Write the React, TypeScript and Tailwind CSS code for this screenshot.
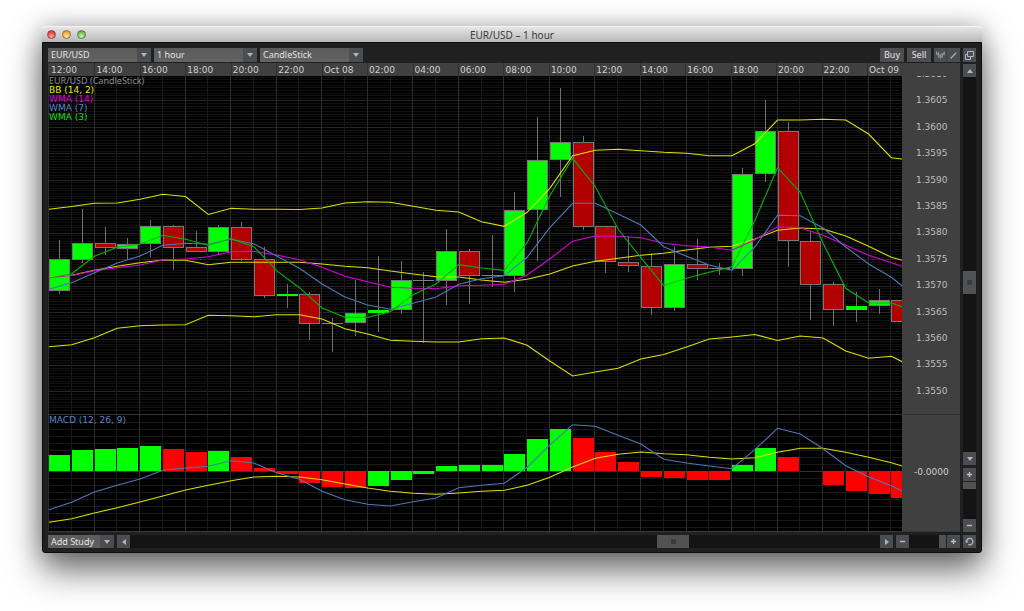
import type { ReactNode } from "react";
import clsx from "clsx";

const STEP = 22.77;
const LEFT = 48;
const RIGHT = 902;

type Tone = "up" | "down" | "flat";

// high, body top, body bottom, low
const CANDLES: [number, number, number, number, Tone][] = [
  [240, 259, 291, 294, "up"],
  [209, 243, 260, 263, "up"],
  [227, 243, 248, 255, "down"],
  [238, 244, 249, 260, "up"],
  [220, 226, 244, 257, "up"],
  [225, 226, 248, 270, "down"],
  [231, 247, 252, 252, "down"],
  [225, 227, 252, 254, "up"],
  [222, 227, 260, 261, "down"],
  [247, 259, 296, 298, "down"],
  [284, 294, 296, 308, "up"],
  [292, 294, 324, 340, "down"],
  [318, 323, 323, 352, "flat"],
  [280, 313, 323, 336, "up"],
  [256, 310, 313, 332, "up"],
  [261, 280, 310, 314, "up"],
  [272, 280, 280, 343, "flat"],
  [229, 251, 281, 305, "up"],
  [249, 251, 276, 304, "down"],
  [235, 275, 275, 287, "flat"],
  [192, 210, 276, 292, "up"],
  [117, 160, 210, 261, "up"],
  [88, 142, 160, 197, "up"],
  [136, 142, 227, 230, "down"],
  [226, 226, 262, 273, "down"],
  [236, 262, 266, 272, "down"],
  [253, 266, 308, 315, "down"],
  [247, 264, 308, 311, "up"],
  [239, 264, 269, 280, "down"],
  [263, 268, 268, 275, "flat"],
  [168, 174, 269, 276, "up"],
  [100, 131, 174, 182, "up"],
  [122, 131, 241, 267, "down"],
  [231, 241, 285, 320, "down"],
  [282, 284, 310, 326, "down"],
  [292, 306, 310, 322, "up"],
  [289, 300, 306, 314, "up"],
  [300, 300, 322, 322, "down"],
];

const BB_UPPER = [209.3, 206.5, 203.3, 203, 199.3, 194.3, 196.5, 214.5, 208.3, 209.3, 209.3, 209.5, 208, 203, 201.7, 202.3, 206.3, 210.3, 212, 221.7, 226.3, 212.3, 188.3, 155.7, 150.3, 149.3, 150.7, 152.3, 153.3, 155.7, 155.7, 143.7, 120, 120, 119.3, 120, 134, 157.7, 159];
const BB_MIDDLE = [277.5, 275.3, 270.3, 266.3, 262.7, 260, 260.3, 264.7, 262.3, 262.3, 262.3, 262.3, 264, 266.3, 267.7, 271, 274, 276.7, 277, 280, 282.3, 279.3, 274, 266, 261.3, 258.3, 255.3, 253.3, 250, 247.3, 246.3, 239, 230.3, 228, 229, 236, 246.3, 257.3, 260.3];
const BB_LOWER = [346.7, 344.7, 337.7, 328.3, 325.7, 325, 324.7, 315.3, 315.7, 316.7, 314.7, 314.7, 319, 328.7, 334, 340.3, 341.3, 342, 342, 338.7, 338, 345.3, 361, 376, 372, 368.3, 359, 354.5, 347, 339, 337, 334.5, 340.5, 336, 338, 351, 358.3, 356.3, 361.7];
const WMA_14 = [277.7, 275.5, 270.7, 267.7, 265, 260, 259, 256.7, 251.7, 251.3, 255, 259.7, 267.3, 276.3, 281.7, 287.3, 288.3, 288.7, 285.7, 285.3, 284.3, 275, 259, 241.3, 236, 236.3, 237.7, 243.3, 245.7, 247, 250.3, 239.7, 226.7, 227.7, 235.3, 245.3, 255.3, 262.7, 266.3];
const WMA_7 = [289.3, 282.7, 272.7, 263, 256, 245.3, 243.3, 244.3, 239.3, 243.7, 256, 268.3, 284, 297, 305, 309.3, 303.3, 297, 284.3, 278.7, 275.7, 257.3, 227.7, 203.3, 203.3, 214, 225, 246.7, 256.3, 265, 270.3, 247, 215.3, 215.7, 228, 247, 264, 277.3, 285.7];
const WMA_3 = [278, 273.7, 256.3, 247.3, 244.3, 235.3, 239.3, 245.3, 238.7, 246.7, 270.7, 287.7, 308, 317.3, 317.3, 311.7, 294.7, 284, 264.7, 268, 270.3, 242.7, 195.7, 158.3, 186.7, 229, 257.7, 285.7, 278.3, 272.3, 266.7, 220.7, 167.7, 192.3, 243.3, 288.3, 303, 303, 306.7];

const ZERO = 471;
// far edge of each histogram bar, measured against ZERO
const HISTOGRAM: [number, Tone][] = [
  [455, "up"], [450, "up"], [449, "up"], [448, "up"], [446, "up"], [449, "down"], [452, "down"], [451, "up"],
  [457, "down"], [468, "down"], [474, "down"], [483, "down"], [487, "down"], [488, "down"], [486, "up"], [480, "up"],
  [474, "up"], [466, "up"], [465, "up"], [465, "up"], [454, "up"], [439, "up"], [429, "up"], [438, "down"],
  [452, "down"], [462, "down"], [477, "down"], [478, "down"], [480, "down"], [480, "down"], [465, "up"], [448, "up"],
  [457, "down"], [471, "flat"], [485, "down"], [491, "down"], [494, "down"], [498, "down"],
];
const MACD = [509.7, 502.3, 492, 485.3, 479, 470.3, 468, 466.3, 460.7, 463, 472.7, 479.3, 491.3, 499.7, 504.3, 506, 501.7, 498, 487.7, 485.3, 483.3, 467.3, 445, 424.7, 426.3, 435.3, 444, 459.3, 463, 466, 468.7, 449.7, 428.3, 434, 448.7, 465.7, 476.7, 485.7, 491];
const SIGNAL = [522.3, 518.7, 513, 507.7, 502, 496, 490, 485.3, 480.7, 477, 476.3, 477, 479.7, 484, 488, 491.3, 493.3, 494.3, 493, 491.3, 490.3, 485.3, 477.3, 467, 458.3, 454.3, 452, 453.7, 454.7, 457.3, 459, 457.7, 452.3, 448.3, 448.3, 452.3, 457.3, 462.7, 466];

const TIMES = ["12:00", "14:00", "16:00", "18:00", "20:00", "22:00", "Oct 08", "02:00", "04:00", "06:00", "08:00", "10:00", "12:00", "14:00", "16:00", "18:00", "20:00", "22:00", "Oct 09"];
const PRICES = ["1.3610", "1.3605", "1.3600", "1.3595", "1.3590", "1.3585", "1.3580", "1.3575", "1.3570", "1.3565", "1.3560", "1.3555", "1.3550"];

const FILL = { up: "#00ff00", down: "#b20000", flat: "#808080" };
const BAR_FILL = { up: "#00ff00", down: "#ff0000", flat: "none" };

function Line({ values, color }: { values: number[]; color: string }) {
  const points = values.map((y, i) => `${Math.min(LEFT + 0.9 + i * STEP, RIGHT).toFixed(1)},${y}`).join(" ");
  return <polyline points={points} fill="none" stroke={color} strokeWidth="1.1" />;
}

function VerticalGrid({ top, bottom }: { top: number; bottom: number }) {
  return (
    <g shapeRendering="crispEdges">
      {CANDLES.map((_, i) => (
        <line
          key={i}
          x1={Math.round(LEFT + i * STEP) + 0.5}
          x2={Math.round(LEFT + i * STEP) + 0.5}
          y1={top}
          y2={bottom}
          stroke={i % 2 ? "#191919" : "#2c2c2c"}
        />
      ))}
    </g>
  );
}

function Candle({ x, high, top, bottom, low, tone }: { x: number; high: number; top: number; bottom: number; low: number; tone: Tone }) {
  const height = bottom - top;
  let body = <rect x={x + 0.5} y={top + 0.5} width="20" height={Math.max(height - 1, 1)} fill={FILL[tone]} stroke="#777777" />;
  if (tone === "flat") body = <line x1={x} x2={x + 21} y1={top + 0.5} y2={top + 0.5} stroke="#808080" />;
  else if (tone === "up" && height <= 4) body = <rect x={x} y={top} width="21" height={height} fill={FILL[tone]} />;
  return (
    <g shapeRendering="crispEdges">
      <line x1={x + 10.5} x2={x + 10.5} y1={high} y2={low} stroke="#707070" />
      {body}
    </g>
  );
}

function PriceChart() {
  const rows = Array.from({ length: 128 }, (_, i) => i);
  return (
    <svg viewBox="48 76 854 338" preserveAspectRatio="none" className="block w-full h-[338px]" role="img" aria-label="Price">
      <g shapeRendering="crispEdges">
        {rows.map((i) => {
          const y = Math.round(76 + i * 2.645 - 2) + 0.5;
          return <line key={i} x1={LEFT} x2={RIGHT} y1={y} y2={y} stroke={i % 10 === 0 ? "#262626" : "#111111"} />;
        })}
      </g>
      <VerticalGrid top={76} bottom={414} />
      {CANDLES.map(([high, top, bottom, low, tone], i) => (
        <Candle key={i} x={Math.round(49 + i * STEP)} high={high} top={top} bottom={bottom} low={low} tone={tone} />
      ))}
      <Line values={BB_UPPER} color="#dede00" />
      <Line values={BB_MIDDLE} color="#dede00" />
      <Line values={BB_LOWER} color="#dede00" />
      <Line values={WMA_14} color="#d800d8" />
      <Line values={WMA_7} color="#5078b4" />
      <Line values={WMA_3} color="#00b400" />
    </svg>
  );
}

function MacdChart() {
  const rows = Array.from({ length: 16 }, (_, i) => i);
  return (
    <svg viewBox="48 415 854 116" preserveAspectRatio="none" className="block w-full h-[116px]" role="img" aria-label="MACD">
      <g shapeRendering="crispEdges">
        {rows.map((i) => (
          <line key={i} x1={LEFT} x2={RIGHT} y1={422.5 + i * 7} y2={422.5 + i * 7} stroke={i === 7 ? "#333333" : "#191919"} />
        ))}
      </g>
      <VerticalGrid top={415} bottom={531} />
      <g shapeRendering="crispEdges">
        {HISTOGRAM.map(([edge, tone], i) => {
          const x = Math.round(49 + i * STEP);
          return <rect key={i} x={x} y={Math.min(edge, ZERO)} width="21" height={Math.abs(edge - ZERO)} fill={BAR_FILL[tone]} />;
        })}
      </g>
      <Line values={SIGNAL} color="#dede00" />
      <Line values={MACD} color="#5078b4" />
    </svg>
  );
}

function Arrow({ className }: { className?: string }) {
  return (
    <svg viewBox="0 0 6 4" className={clsx("w-[6px] h-1 shrink-0", className)} aria-hidden="true">
      <path d="M0 0h6L3 4z" fill="#a9b7c3" />
    </svg>
  );
}

function Plus() {
  return (
    <svg viewBox="0 0 5 5" className="w-[5px] h-[5px]" aria-hidden="true">
      <path d="M1.8 0h1.4v1.8H5v1.4H3.2V5H1.8V3.2H0V1.8h1.8z" fill="#b4c2ce" />
    </svg>
  );
}

function Minus() {
  return (
    <svg viewBox="0 0 5 5" className="w-[5px] h-[5px]" aria-hidden="true">
      <path d="M0 1.8h5v1.4H0z" fill="#b4c2ce" />
    </svg>
  );
}

function ToolButton({ label, className, children }: { label: string; className?: string; children: ReactNode }) {
  return (
    <button
      type="button"
      aria-label={label}
      className={clsx("flex items-center justify-center w-[13px] shrink-0 bg-[#4b4d50] hover:bg-[#5a5c5f]", className ?? "h-[13px]")}
    >
      {children}
    </button>
  );
}

function Picker({ label, options }: { label: string; options: string[] }) {
  return (
    <div className="relative flex w-[103px] h-[14px]">
      <select
        aria-label={label}
        className="appearance-none w-full h-full pl-[3px] pr-4 bg-linear-to-b from-[#5a5a5a] to-[#636363] text-[9px] leading-[14px] text-[#e0e0e0] outline-none"
      >
        {options.map((o) => <option key={o}>{o}</option>)}
      </select>
      <span className="absolute right-0 top-0 flex items-center justify-center w-[14px] h-full bg-[#4b4d50] pointer-events-none">
        <Arrow />
      </span>
    </div>
  );
}

const textButton = "h-[14px] bg-[#4e4e50] text-[9px] leading-[14px] text-[#e6e6e6] hover:bg-[#5a5c5f]";
const track = "appearance-none block m-0 bg-[#141414] outline-none [&::-webkit-slider-thumb]:appearance-none [&::-webkit-slider-thumb]:bg-[#505254]";
const vertical = "w-[13px] min-h-0 [writing-mode:vertical-lr] [&::-webkit-slider-thumb]:w-[13px]";
const grip = "[&::-webkit-slider-thumb]:bg-[linear-gradient(#393b3d,#393b3d)] [&::-webkit-slider-thumb]:bg-[length:5px_5px] [&::-webkit-slider-thumb]:bg-center [&::-webkit-slider-thumb]:bg-no-repeat";

function TitleBar() {
  return (
    <header className="relative flex items-center h-4 pl-[5px] rounded-t-[4px] bg-linear-to-b from-[#e6e6e6] to-[#b8b8b8] border-t border-[#f4f4f4]">
      <div className="flex gap-[6px]">
        <button type="button" aria-label="Close" className="w-[9px] h-[9px] rounded-full border border-[#8a4a48] bg-[radial-gradient(circle_at_50%_80%,#ffb0a8,#ee4a45_60%,#c03a38)]" />
        <button type="button" aria-label="Minimize" className="w-[9px] h-[9px] rounded-full border border-[#94703c] bg-[radial-gradient(circle_at_50%_80%,#ffe9a0,#f2b14a_60%,#c08530)]" />
        <button type="button" aria-label="Zoom" className="w-[9px] h-[9px] rounded-full border border-[#55803f] bg-[radial-gradient(circle_at_50%_80%,#d4f5b4,#7cc35c_60%,#569040)]" />
      </div>
      <h1 className="absolute inset-x-0 text-center text-[10px] leading-[14px] text-[#3c3c3c] pointer-events-none">EUR/USD – 1 hour</h1>
    </header>
  );
}

function Toolbar() {
  return (
    <div className="flex items-center gap-[3px] h-[14px]">
      <Picker label="Instrument" options={["EUR/USD", "GBP/USD", "USD/JPY"]} />
      <Picker label="Interval" options={["1 hour", "4 hours", "1 day"]} />
      <Picker label="Chart type" options={["CandleStick", "Bar", "Line"]} />
      <button type="button" className={clsx(textButton, "w-6 ml-auto")}>Buy</button>
      <button type="button" className={clsx(textButton, "w-6")}>Sell</button>
      <div className="flex">
        <ToolButton label="Studies" className="h-[14px] border-r border-[#3e4042]">
          <svg viewBox="0 0 9 8" className="w-[9px] h-2 shrink-0" aria-hidden="true">
            <path d="M.7.6v3.2M2.6 1.4v5M4.4 3.4v4M6.2 2v4.6M8.2.4v3.6" stroke="#8f9aa4" strokeWidth="1.3" />
            <path d="M.9 2.6l2.4 3.2h2.4l2.4-3.4" fill="none" stroke="#7b858d" strokeWidth="1.2" />
          </svg>
        </ToolButton>
        <ToolButton label="Draw line" className="h-[14px]">
          <svg viewBox="0 0 7 7" className="w-[7px] h-[7px]" aria-hidden="true">
            <path d="M.7 6.3 6.3.7" stroke="#b4bec7" strokeWidth="1.2" />
          </svg>
        </ToolButton>
      </div>
    </div>
  );
}

function TimeAxis() {
  return (
    <div className="flex h-[13px] mt-px pl-px bg-[#404040] text-[9px] leading-[14px] font-['DejaVu_Sans',sans-serif] text-[#cfcfcf]">
      <div className="grid flex-1 grid-cols-[repeat(18,minmax(0,1fr))_36px]">
        {TIMES.map((t, i) => (
          <span key={i} className={clsx("h-[13px] pl-px whitespace-nowrap border-l", i ? "border-[#303030]" : "border-transparent")}>{t}</span>
        ))}
      </div>
      <div className="w-[57px]" />
    </div>
  );
}

function Panels() {
  return (
    <div className="border-b border-[#3a3a3a] font-['DejaVu_Sans',sans-serif] text-[9px]">
      <section className="flex h-[338px] overflow-hidden">
        <div className="relative flex-1 bg-black">
          <PriceChart />
          <div className="absolute left-px top-0 flex flex-col leading-[9px]">
            <span className="leading-[10px] text-[#8c8c8c] font-['Noto_Sans',sans-serif]">EUR/USD (CandleStick)</span>
            <span className="text-[#e6e600]">BB (14, 2)</span>
            <span className="text-[#e000e0]">WMA (14)</span>
            <span className="text-[#5f86c4]">WMA (7)</span>
            <span className="text-[#00e600]">WMA (3)</span>
          </div>
        </div>
        <div className="w-[58px] bg-[#404040] overflow-hidden">
          <div className="flex flex-col justify-between h-[329px] -mt-2 pl-[14px] leading-[12px] text-[#bdbdbd]">
            {PRICES.map((p) => <span key={p}>{p}</span>)}
          </div>
        </div>
      </section>
      <section className="flex border-t border-[#333333]">
        <div className="relative flex-1 bg-black">
          <MacdChart />
          <span className="absolute left-px top-0 leading-[10px] text-[#5f86c4]">MACD (12, 26, 9)</span>
        </div>
        <div className="flex items-center w-[58px] pl-[12px] bg-[#404040] text-[#cccccc]">-0.0000</div>
      </section>
    </div>
  );
}

function BottomBar() {
  return (
    <div className="flex h-[13px] mt-[3px]">
      <button type="button" className="flex items-center h-[13px] bg-[#5e5e5e] text-[9px] leading-[13px] text-[#e6e6e6]">
        <span className="w-[52px] pl-[3px] text-left">Add Study</span>
        <span className="flex items-center justify-center w-[14px] h-full bg-[#4b4d50]"><Arrow /></span>
      </button>
      <div className="flex flex-1 min-w-0 ml-[3px]">
        <ToolButton label="Scroll left"><Arrow className="rotate-90" /></ToolButton>
        <input type="range" aria-label="Scroll through time" min={0} max={1000} defaultValue={734} className={clsx(track, grip, "flex-1 min-w-0 h-[13px] [&::-webkit-slider-thumb]:w-8 [&::-webkit-slider-thumb]:h-[13px]")} />
        <ToolButton label="Scroll right"><Arrow className="-rotate-90" /></ToolButton>
      </div>
      <div className="flex ml-[3px]">
        <ToolButton label="Zoom out time"><Minus /></ToolButton>
        <input type="range" aria-label="Time zoom" defaultValue={100} className={clsx(track, "w-[37px] h-[13px] mr-px [&::-webkit-slider-thumb]:w-[7px] [&::-webkit-slider-thumb]:h-[13px]")} />
        <ToolButton label="Zoom in time"><Plus /></ToolButton>
      </div>
    </div>
  );
}

function SideBar() {
  return (
    <div className="flex flex-col w-[13px]">
      <ToolButton label="Detach window" className="h-[14px] mb-[2px]">
        <svg viewBox="0 0 9 9" className="w-[9px] h-[9px]" fill="none" stroke="#a9b7c3" aria-hidden="true">
          <path d="M2.5.5h6v5h-6zM2.5 3.5h-2v5h5v-3" />
        </svg>
      </ToolButton>
      <ToolButton label="Scroll up"><Arrow className="rotate-180" /></ToolButton>
      <input type="range" aria-label="Scroll through price" min={0} max={1000} defaultValue={551} className={clsx(track, vertical, grip, "flex-1 [&::-webkit-slider-thumb]:h-[23px]")} />
      <ToolButton label="Scroll down"><Arrow /></ToolButton>
      <ToolButton label="Zoom in price" className="h-[13px] mt-[3px] mb-px"><Plus /></ToolButton>
      <input type="range" aria-label="Price zoom" defaultValue={100} className={clsx(track, vertical, "h-[37px] [direction:rtl] [&::-webkit-slider-thumb]:h-[7px]")} />
      <ToolButton label="Zoom out price"><Minus /></ToolButton>
      <ToolButton label="Reset view" className="h-[13px] mt-[3px]">
        <svg viewBox="0 0 9 9" className="w-[9px] h-[9px]" aria-hidden="true">
          <path d="M1.5 4.5A3.2 3.2 0 1 1 3.2 7.4" fill="none" stroke="#a9b7c3" strokeWidth="1.3" />
          <path d="M0 3.8h3.6L1.6 6.2z" fill="#a9b7c3" />
        </svg>
      </ToolButton>
    </div>
  );
}

export default function App() {
  return (
    <div className="min-h-screen px-[42px] pt-[26px] pb-14 bg-white font-['Noto_Sans',sans-serif] overflow-hidden">
      <main className="rounded-[4px] shadow-[0_18px_34px_rgba(0,0,0,0.55),0_0_24px_rgba(0,0,0,0.25)]">
        <TitleBar />
        <div className="flex gap-[3px] px-[5px] pt-[5px] pb-1 rounded-b-[3px] border border-[#0c0c0c] bg-[#202020]">
          <div className="flex-1 min-w-0">
            <Toolbar />
            <TimeAxis />
            <Panels />
            <BottomBar />
          </div>
          <SideBar />
        </div>
      </main>
    </div>
  );
}
